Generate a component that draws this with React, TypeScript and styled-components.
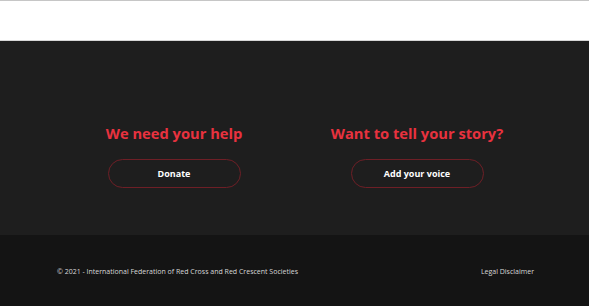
import React from 'react';
import styled, { createGlobalStyle } from 'styled-components';

const GlobalStyle = createGlobalStyle`
  body {
    margin: 0;
    padding: 0;
    font-family: "Open Sans", "Liberation Sans", sans-serif;
    background: #141414;
  }
`;

const Header = styled.header`
  height: 39px;
  background: #ffffff;
  border-top: 1px solid #c6c6c6;
  border-bottom: 1px solid #d6d6d6;
`;

const CallSection = styled.section`
  background: #1e1e1e;
  height: 194px;
  box-sizing: border-box;
  padding-top: 81px;
  display: grid;
  grid-template-columns: 243px 243px;
  justify-content: center;
  align-content: start;
  padding-left: 2px;
`;

const Column = styled.div`
  display: flex;
  flex-direction: column;
  align-items: center;
`;

const Heading = styled.h2`
  margin: 0;
  color: #e8323f;
  font-family: "Open Sans", sans-serif;
  font-weight: 700;
  font-size: 14.7px;
  line-height: 22px;
`;

const PillButton = styled.a`
  margin-top: 15px;
  width: 133px;
  height: 29px;
  box-sizing: border-box;
  border: 1px solid #6e1f26;
  border-radius: 15px;
  display: flex;
  align-items: center;
  justify-content: center;
  color: #ffffff;
  font-weight: 700;
  font-size: 9px;
  text-decoration: none;
  cursor: pointer;
`;

const Footer = styled.footer`
  background: #141414;
  height: 71px;
  display: flex;
  align-items: center;
  justify-content: space-between;
  padding: 2px 55px 0 57px;
  box-sizing: border-box;
  color: #d8d8d8;
  font-size: 7px;
`;

const FooterLink = styled.a`
  color: #d8d8d8;
  text-decoration: none;
`;

function App() {
  return (
    <>
      <GlobalStyle />
      <Header />
      <CallSection>
        <Column>
          <Heading>We need your help</Heading>
          <PillButton>Donate</PillButton>
        </Column>
        <Column>
          <Heading>Want to tell your story?</Heading>
          <PillButton>Add your voice</PillButton>
        </Column>
      </CallSection>
      <Footer>
        <span>© 2021 - International Federation of Red Cross and Red Crescent Societies</span>
        <FooterLink>Legal Disclaimer</FooterLink>
      </Footer>
    </>
  );
}

export default App;
